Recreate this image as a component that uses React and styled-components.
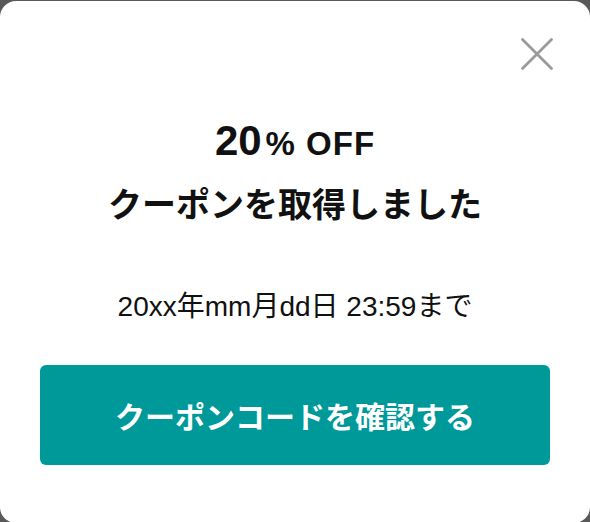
import React from "react";
import styled, { createGlobalStyle } from "styled-components";

const GlobalStyle = createGlobalStyle`
  html, body {
    margin: 0;
    padding: 0;
    background: #595959;
  }
  body {
    font-family: "Liberation Sans", "Noto Sans CJK JP", sans-serif;
    color: #111;
  }
`;

const Overlay = styled.div`
  width: 590px;
  height: 522px;
  padding-top: 1px;
  overflow: hidden;
`;

const Modal = styled.div`
  position: relative;
  box-sizing: border-box;
  width: 590px;
  height: 522px;
  background: #fff;
  border-radius: 16px;
  padding: 116px 40px 0;
  display: flex;
  flex-direction: column;
  align-items: center;
`;

const CloseButton = styled.button`
  position: absolute;
  top: 36px;
  right: 36px;
  width: 34px;
  height: 34px;
  padding: 0;
  border: none;
  background: none;
  cursor: pointer;
  display: flex;
  align-items: center;
  justify-content: center;
`;

const Discount = styled.div`
  font-weight: 700;
  font-size: 33px;
  line-height: 48px;
  height: 48px;
  white-space: nowrap;
`;

const Rate = styled.span`
  font-size: 42px;
`;

const Unit = styled.span`
  margin-left: 4px;
  letter-spacing: 1px;
`;

const Title = styled.h2`
  margin: 18px 0 0;
  font-family: "Noto Sans CJK JP", sans-serif;
  font-size: 34px;
  font-weight: 700;
  line-height: 40px;
  white-space: nowrap;
`;

const Expiry = styled.p`
  margin: 67px 0 0;
  font-size: 28px;
  line-height: 34px;
  white-space: nowrap;
`;

const PrimaryButton = styled.button`
  flex-shrink: 0;
  margin-top: 41px;
  width: 510px;
  height: 100px;
  border: none;
  border-radius: 6px;
  background: #009999;
  color: #fff;
  font-family: "Noto Sans CJK JP", sans-serif;
  font-size: 30px;
  font-weight: 700;
  cursor: pointer;
`;

function CloseIcon() {
  return (
    <svg width="34" height="34" viewBox="0 0 34 34">
      <path
        d="M2.5 2.5 L31.5 31.5 M31.5 2.5 L2.5 31.5"
        stroke="#9a9a9a"
        strokeWidth="2.8"
        strokeLinecap="round"
      />
    </svg>
  );
}

export default function App() {
  return (
    <>
      <GlobalStyle />
      <Overlay>
        <Modal>
          <CloseButton aria-label="閉じる">
            <CloseIcon />
          </CloseButton>
          <Discount>
            <Rate>20</Rate>
            <Unit>% OFF</Unit>
          </Discount>
          <Title>クーポンを取得しました</Title>
          <Expiry>20xx年mm月dd日 23:59まで</Expiry>
          <PrimaryButton>クーポンコードを確認する</PrimaryButton>
        </Modal>
      </Overlay>
    </>
  );
}
